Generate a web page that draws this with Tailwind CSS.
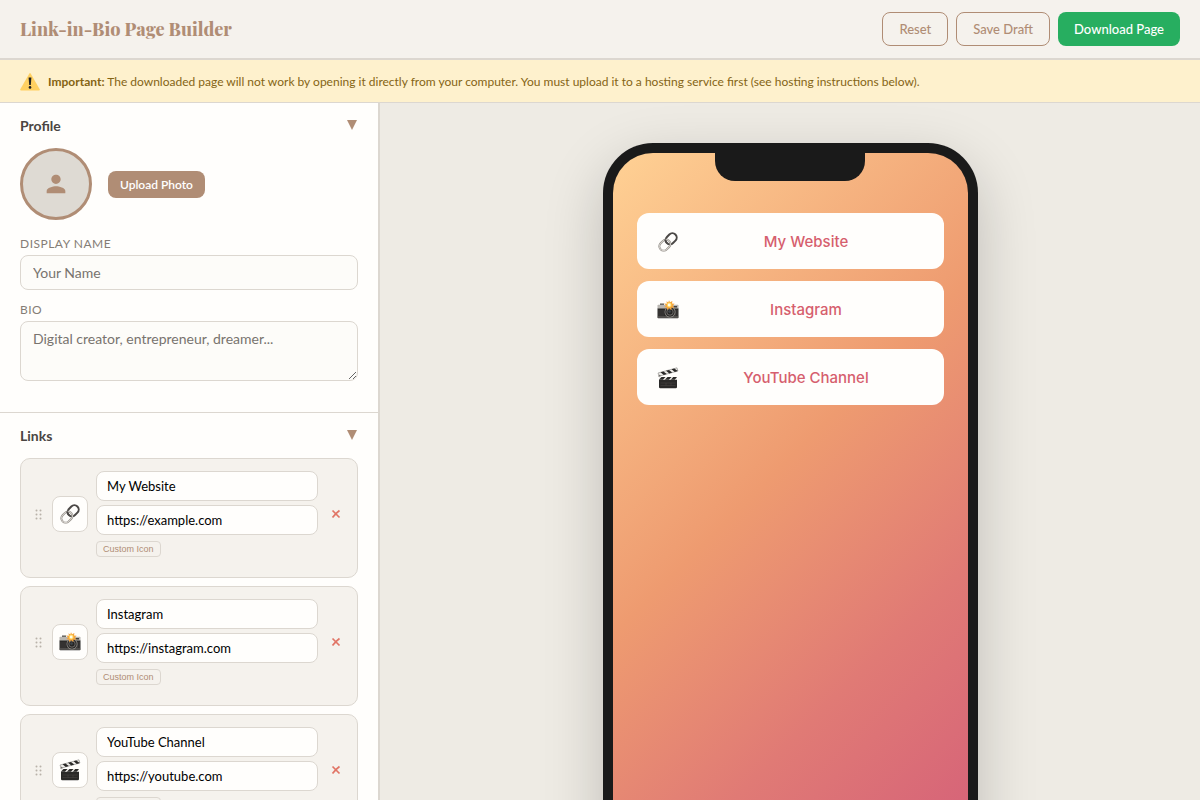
<!DOCTYPE html>
<html lang="en">
<head>
<meta charset="utf-8">
<meta name="viewport" content="width=device-width, initial-scale=1">
<title>Link-in-Bio Page Builder</title>
<script src="https://cdn.jsdelivr.net/npm/@tailwindcss/browser@4"></script>
</head>
<body class="flex h-screen flex-col overflow-hidden bg-[#eeebe4] font-[Lato,sans-serif] text-[#4a4542]">

<svg class="hidden" aria-hidden="true">
  <defs>
    <linearGradient id="steel" x1="0" y1="0" x2="1" y2="1">
      <stop offset="0" stop-color="#d8d4cf"/><stop offset=".5" stop-color="#8b8783"/><stop offset="1" stop-color="#3f3d3b"/>
    </linearGradient>
  </defs>
  <symbol id="link" viewBox="0 0 22 22">
    <g fill="none" transform="rotate(-45 11 11)">
      <rect x="9.500" y="6.700" width="12" height="8.600" rx="4.300" stroke="#4b4846" stroke-width="2"/>
      <rect x="9.700" y="6.900" width="11.600" height="8.200" rx="4.100" stroke="url(#steel)" stroke-width="1"/>
      <rect x=".6" y="6.700" width="12" height="8.600" rx="4.300" stroke="#85807b" stroke-width="2"/>
      <rect x=".6" y="6.700" width="12" height="8.600" rx="4.300" stroke="#d5d1cc" stroke-width="1.100"/>
      <path d="M9.500 11V9.800a3.200 3.200 0 0 1 1.600-2.500" stroke="#4b4846" stroke-width="1.800"/>
    </g>
  </symbol>
  <symbol id="camera" viewBox="0 0 22 22">
    <path d="M3 4.500h4v2H3z" fill="#55524f"/>
    <path d="M1.200 5.800h19.600q.7 0 .7.700V10H.5V6.500q0-.7.700-.7z" fill="#b9b6b1"/>
    <path d="M.5 9.500h21v9q0 .8-.8.800H1.300q-.8 0-.8-.8z" fill="#2b2a29"/>
    <path d="M.7 18h20.600" stroke="#777370" stroke-width="1"/>
    <path d="M2 11v6M4 11v6M6 11v6M18.500 11v6M20.200 11v6" stroke="#464442" stroke-width=".7"/>
    <path d="M16.500 7h3.500v1.500h-3.500z" fill="#45423f"/>
    <circle cx="13" cy="13" r="5.500" fill="#8c8985"/>
    <circle cx="13" cy="13" r="4.700" fill="#262524"/>
    <circle cx="13" cy="13" r="3.200" fill="none" stroke="#74716e" stroke-width=".9"/>
    <circle cx="12.600" cy="12.600" r="1.400" fill="#3f4449"/>
    <path d="m12 1.200 1 2.100 2.400-1.300-.4 2.600 2.700.2-2 1.700 1.700 2.200-2.800-.2-.3 2.500-2.100-1.700-2.100 1.700-.2-2.600-2.700-.1 1.900-1.900L7.100 4.600l2.800.1-.4-2.500 1.800 1.300z" fill="#f6a43a"/>
    <circle cx="12.200" cy="6" r="2.400" fill="#ffd65b"/>
    <circle cx="12.200" cy="6" r="1.400" fill="#fffbea"/>
  </symbol>
  <symbol id="clapper" viewBox="0 0 22 22">
    <path d="M1 6 20 .8l.9 3.200L2 9.200z" fill="#f0eeeb" stroke="#4a4846" stroke-width=".4"/>
    <path d="m3.500 5.300 3.300 2.600 3-.8-3.300-2.600zM9 3.800l3.300 2.600 3-.8L12 3zM14.500 2.300l3.300 2.600 3-.8-3.500-2.500z" fill="#292827"/>
    <path d="M1 6v4l3-1z" fill="#bab7b3"/>
    <circle cx="2.800" cy="8.800" r=".7" fill="#5a5856"/>
    <path d="M2 10h18v10q0 1.300-1.300 1.300H3.300Q2 21.300 2 20z" fill="#2a2928"/>
    <path d="M2 10h18v2.800H2z" fill="#f0eeeb"/>
    <path d="M4.500 10h4l-2.600 2.800h-4zM10.500 10h4l-2.600 2.800h-4zM16.200 10H20l-2.300 2.800h-3.800z" fill="#292827"/>
    <path d="M3.500 16h15M3.500 18.500h15M9 16v2.500M14 16v2.500" stroke="#55524f" stroke-width=".4"/>
  </symbol>
  <symbol id="grip" viewBox="0 0 7 11">
    <g fill="#b9b2a9"><circle cx="1.500" cy="1.500" r="1"/><circle cx="5.500" cy="1.500" r="1"/><circle cx="1.500" cy="5.500" r="1"/><circle cx="5.500" cy="5.500" r="1"/><circle cx="1.500" cy="9.500" r="1"/><circle cx="5.500" cy="9.500" r="1"/></g>
  </symbol>
  <symbol id="cross" viewBox="0 0 10 10">
    <path d="M1.500 1.500q3 3 7 7M8.500 1.500q-4 3-7 7" fill="none" stroke="#e17566" stroke-width="1.700"/>
  </symbol>
  <symbol id="caret" viewBox="0 0 10 10"><path d="M0 0h10L5 10z" fill="#b08d75"/></symbol>
</svg>

<header class="flex shrink-0 items-center justify-between border-b-2 border-[#dcd7d0] bg-[#f5f2ed] px-5 py-3">
  <h1 class="font-['Playfair_Display','Liberation_Serif',serif] text-[18px] leading-6 font-extrabold text-[#b08d75]">Link-in-Bio Page Builder</h1>
  <div class="flex gap-2 text-[13px] leading-4 font-medium">
    <button class="rounded-lg border border-[#b08d75] px-4 py-2 text-[#b08d75]">Reset</button>
    <button class="rounded-lg border border-[#b08d75] px-4 py-2 text-[#b08d75]">Save Draft</button>
    <button class="rounded-lg bg-[#27ae60] px-4 py-2 text-white">Download Page</button>
  </div>
</header>

<div role="alert" class="flex shrink-0 items-center gap-2 border-b border-[#dcd7d0] bg-[#fef1cd] px-5 pt-3 pb-[10px] text-[12px] leading-5 text-[#856414]">
  <svg class="size-5" viewBox="0 0 20 20" aria-hidden="true">
    <path d="M9.200 1.700q.8-1.300 1.600 0l8.900 15.500q.6 1.300-.8 1.300H1.100q-1.400 0-.8-1.300z" fill="#ffd061"/>
    <path d="M8.600 5.500h2.800L10.800 13H9.200z" fill="#222"/><circle cx="10" cy="15.400" r="1.300" fill="#222"/>
  </svg>
  <p><strong>Important:</strong> The downloaded page will not work by opening it directly from your computer. You must upload it to a hosting service first (see hosting instructions below).</p>
</div>

<div class="flex min-h-0 flex-1">
  <aside class="w-[380px] shrink-0 overflow-hidden border-r-2 border-[#dcd7d0] bg-[#fffefc]">
    <section class="border-b border-[#dcd7d0]">
      <button class="flex w-full items-center justify-between px-5 py-3 text-[14px] leading-[21px] font-bold text-[#4a4542]">Profile<svg class="mr-px mb-[2px] size-[10px]" aria-hidden="true"><use href="#caret"/></svg></button>
      <div class="px-5 pb-[31px]">
        <div class="flex items-center gap-4">
          <div class="flex size-[72px] items-center justify-center rounded-full border-3 border-[#b08d75] bg-[#dedad3]">
            <svg class="size-7" viewBox="0 0 24 24" fill="#b08d75" aria-hidden="true"><path d="M12 12c2.210 0 4-1.790 4-4s-1.790-4-4-4-4 1.790-4 4 1.790 4 4 4zm0 2c-2.670 0-8 1.340-8 4v2h16v-2c0-2.660-5.330-4-8-4z"/></svg>
          </div>
          <button class="rounded-lg bg-[#b08d75] px-3 py-[6px] text-[12px] leading-[15px] font-semibold text-white">Upload Photo</button>
        </div>
        <label for="name" class="mt-4 mb-1 block text-[12px] leading-[15px] tracking-[0.5px] text-[#857d76] uppercase">Display Name</label>
        <input id="name" type="text" placeholder="Your Name" class="block w-full rounded-lg border border-[#dcd7d0] bg-[#fdfcf9] px-3 py-2 text-[14px] leading-[17px] placeholder:text-[#78736e]">
        <label for="bio" class="mt-3 mb-1 block text-[12px] leading-[15px] tracking-[0.5px] text-[#857d76] uppercase">Bio</label>
        <textarea id="bio" placeholder="Digital creator, entrepreneur, dreamer..." class="block h-[60px] w-full resize-y rounded-lg border border-[#dcd7d0] bg-[#fdfcf9] px-3 py-2 text-[14px] leading-[17px] placeholder:text-[#78736e]"></textarea>
      </div>
    </section>

    <section>
      <button class="flex w-full items-center justify-between px-5 py-3 text-[14px] leading-[21px] font-bold text-[#4a4542]">Links<svg class="mr-px mb-[2px] size-[10px]" aria-hidden="true"><use href="#caret"/></svg></button>
      <ul class="flex flex-col gap-2 px-5 pb-5">
        <li class="flex items-center gap-2 rounded-[10px] border border-[#dcd7d0] bg-[#f5f2ed] px-3 pt-3 pb-5">
          <span class="flex w-[11px] justify-center"><svg class="h-[11px] w-[7px]" aria-hidden="true"><use href="#grip"/></svg></span>
          <button aria-label="Choose icon" class="flex size-9 items-center justify-center rounded-lg border border-[#dcd7d0] bg-[#fffefc]"><svg class="size-[22px]"><use href="#link"/></svg></button>
          <div class="flex min-w-0 flex-1 flex-col items-start gap-1">
            <input aria-label="Link title" value="My Website" class="w-full rounded-lg border border-[#dcd7d0] bg-[#fffefc] px-[10px] py-[6px] text-[13px] leading-4 text-black">
            <input aria-label="Link URL" value="https://example.com" class="w-full rounded-lg border border-[#dcd7d0] bg-[#fffefc] px-[10px] py-[6px] text-[13px] leading-4 text-black">
            <button class="mt-[2px] rounded-sm border border-[#dcd7d0] px-[6px] py-[2px] font-['Liberation_Sans',sans-serif] text-[9px] leading-[10px] text-[#b08d75]">Custom Icon</button>
          </div>
          <button aria-label="Remove link" class="flex w-[19px] justify-center"><svg class="size-[10px]"><use href="#cross"/></svg></button>
        </li>
        <li class="flex items-center gap-2 rounded-[10px] border border-[#dcd7d0] bg-[#f5f2ed] px-3 pt-3 pb-5">
          <span class="flex w-[11px] justify-center"><svg class="h-[11px] w-[7px]" aria-hidden="true"><use href="#grip"/></svg></span>
          <button aria-label="Choose icon" class="flex size-9 items-center justify-center rounded-lg border border-[#dcd7d0] bg-[#fffefc]"><svg class="size-[22px]"><use href="#camera"/></svg></button>
          <div class="flex min-w-0 flex-1 flex-col items-start gap-1">
            <input aria-label="Link title" value="Instagram" class="w-full rounded-lg border border-[#dcd7d0] bg-[#fffefc] px-[10px] py-[6px] text-[13px] leading-4 text-black">
            <input aria-label="Link URL" value="https://instagram.com" class="w-full rounded-lg border border-[#dcd7d0] bg-[#fffefc] px-[10px] py-[6px] text-[13px] leading-4 text-black">
            <button class="mt-[2px] rounded-sm border border-[#dcd7d0] px-[6px] py-[2px] font-['Liberation_Sans',sans-serif] text-[9px] leading-[10px] text-[#b08d75]">Custom Icon</button>
          </div>
          <button aria-label="Remove link" class="flex w-[19px] justify-center"><svg class="size-[10px]"><use href="#cross"/></svg></button>
        </li>
        <li class="flex items-center gap-2 rounded-[10px] border border-[#dcd7d0] bg-[#f5f2ed] px-3 pt-3 pb-5">
          <span class="flex w-[11px] justify-center"><svg class="h-[11px] w-[7px]" aria-hidden="true"><use href="#grip"/></svg></span>
          <button aria-label="Choose icon" class="flex size-9 items-center justify-center rounded-lg border border-[#dcd7d0] bg-[#fffefc]"><svg class="size-[22px]"><use href="#clapper"/></svg></button>
          <div class="flex min-w-0 flex-1 flex-col items-start gap-1">
            <input aria-label="Link title" value="YouTube Channel" class="w-full rounded-lg border border-[#dcd7d0] bg-[#fffefc] px-[10px] py-[6px] text-[13px] leading-4 text-black">
            <input aria-label="Link URL" value="https://youtube.com" class="w-full rounded-lg border border-[#dcd7d0] bg-[#fffefc] px-[10px] py-[6px] text-[13px] leading-4 text-black">
            <button class="mt-[2px] rounded-sm border border-[#dcd7d0] px-[6px] py-[2px] font-['Liberation_Sans',sans-serif] text-[9px] leading-[10px] text-[#b08d75]">Custom Icon</button>
          </div>
          <button aria-label="Remove link" class="flex w-[19px] justify-center"><svg class="size-[10px]"><use href="#cross"/></svg></button>
        </li>
      </ul>
    </section>
  </aside>

  <main class="flex min-w-0 flex-1 items-start justify-center overflow-hidden p-10">
    <div class="h-[812px] w-[375px] shrink-0 rounded-[50px] bg-[#1a1a1a] p-[10px] shadow-[0_20px_60px_rgba(0,0,0,0.2)]">
      <div class="h-full overflow-hidden rounded-[40px] bg-[linear-gradient(135deg,#ffd194_0%,#ee9b70_42%,#e07a75_67%,#d1587a_100%)]">
        <div class="mx-auto h-7 w-[150px] rounded-b-[20px] bg-[#1a1a1a]"></div>
        <nav class="flex flex-col gap-3 px-6 pt-8 font-[Inter,sans-serif] text-[15px] leading-6 font-medium text-[#d65f6e]">
          <a href="https://example.com" class="flex items-center rounded-xl bg-[#fffefc] px-5 pt-[17px] pb-[15px]"><svg class="mr-[10px] size-[22px]" aria-hidden="true"><use href="#link"/></svg><span class="flex-1 text-center">My Website</span></a>
          <a href="https://instagram.com" class="flex items-center rounded-xl bg-[#fffefc] px-5 pt-[17px] pb-[15px]"><svg class="mr-[10px] size-[22px]" aria-hidden="true"><use href="#camera"/></svg><span class="flex-1 text-center">Instagram</span></a>
          <a href="https://youtube.com" class="flex items-center rounded-xl bg-[#fffefc] px-5 pt-[17px] pb-[15px]"><svg class="mr-[10px] size-[22px]" aria-hidden="true"><use href="#clapper"/></svg><span class="flex-1 text-center">YouTube Channel</span></a>
        </nav>
      </div>
    </div>
  </main>
</div>
</body>
</html>
